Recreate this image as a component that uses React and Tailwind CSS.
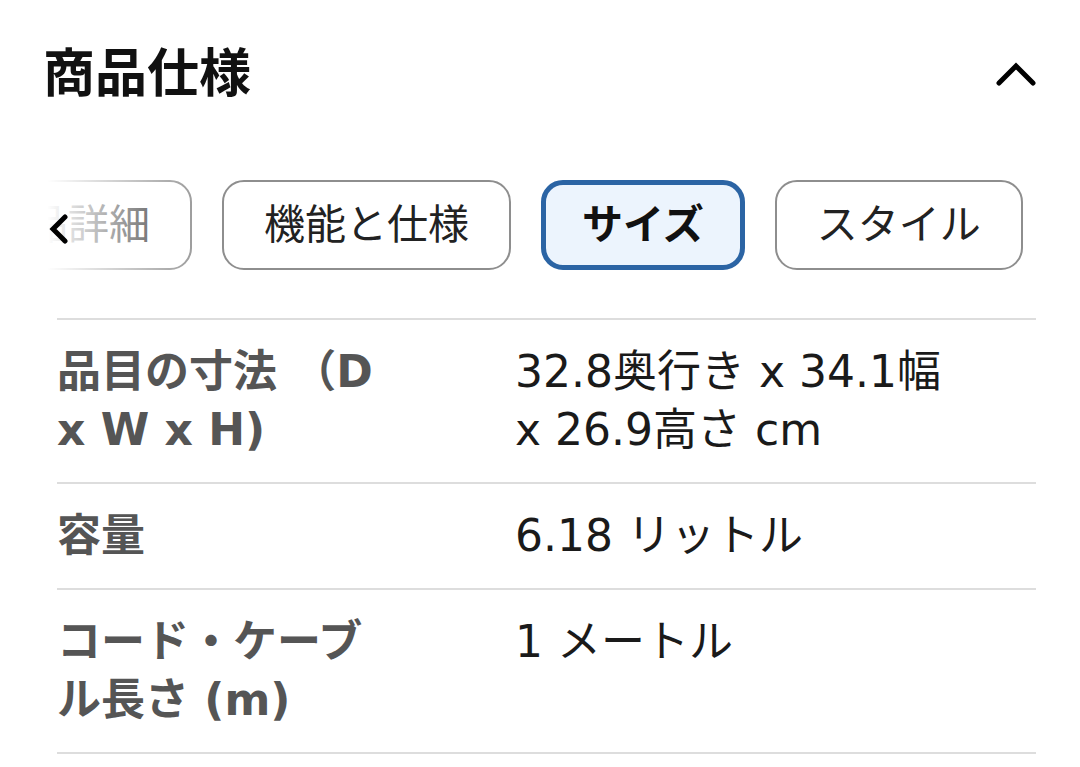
import React from "react";

const FONT = { fontFamily: 'Inter, "Noto Sans CJK JP", sans-serif' };
const ROWFONT = { fontFamily: '"DejaVu Sans", "Noto Sans CJK JP", sans-serif' };

function Chip({ children, selected }) {
  if (selected) {
    return (
      <div className="shrink-0 h-[90px] flex items-center px-[36px] rounded-[22px] border-[5px] border-[#2b64a4] bg-[#ecf4fd] text-[41px] font-bold text-[#111]">
        {children}
      </div>
    );
  }
  return (
    <div className="shrink-0 h-[90px] flex items-center px-[40px] rounded-[22px] border-2 border-[#8e8e8e] bg-white text-[41px] text-[#222]">
      {children}
    </div>
  );
}

function Row({ label, value }) {
  return (
    <div className="grid grid-cols-[458px_1fr] border-t-2 border-[#dddddd] py-[23px] text-[44px] leading-[58px]" style={ROWFONT}>
      <div className="w-[338px] h-fit font-bold text-[#555555]">{label}</div>
      <div className="w-[450px] h-fit text-[#1a1a1a]">{value}</div>
    </div>
  );
}

export default function App() {
  return (
    <div className="w-[1080px] h-[767px] bg-white overflow-hidden" style={FONT}>
      <div className="flex items-center justify-between h-[60px] mt-[44px] pl-[43px] pr-[44px]">
        <div className="text-[52px] font-bold text-[#111] leading-[60px]">商品仕様</div>
        <svg width="40" height="24" viewBox="0 0 40 24" fill="none">
          <path d="M3 21 L20 4 L37 21" stroke="#000" strokeWidth="5" strokeLinecap="round" strokeLinejoin="miter" />
        </svg>
      </div>

      <div className="relative mt-[76px] h-[90px] overflow-hidden">
        <div className="flex gap-[30px] ml-[-56px]">
          <Chip>製品詳細</Chip>
          <Chip>機能と仕様</Chip>
          <Chip selected>サイズ</Chip>
          <Chip>スタイル</Chip>
        </div>
        <div className="absolute left-0 top-0 h-full w-[215px] bg-gradient-to-r from-white from-[22%] to-white/0" />
        <svg className="absolute left-[47px] top-[34px]" width="22" height="30" viewBox="0 0 22 30" fill="none">
          <path d="M18 3 L6 15 L18 27" stroke="#000" strokeWidth="5" strokeLinecap="round" strokeLinejoin="miter" />
        </svg>
      </div>

      <div className="mt-[48px] ml-[57px] mr-[44px] border-b-2 border-[#dddddd]">
        <Row label="品目の寸法 （D x W x H)" value="32.8奥行き x 34.1幅 x 26.9高さ cm" />
        <Row label="容量" value="6.18 リットル" />
        <Row label="コード・ケーブル長さ (m)" value="1 メートル" />
      </div>
    </div>
  );
}
